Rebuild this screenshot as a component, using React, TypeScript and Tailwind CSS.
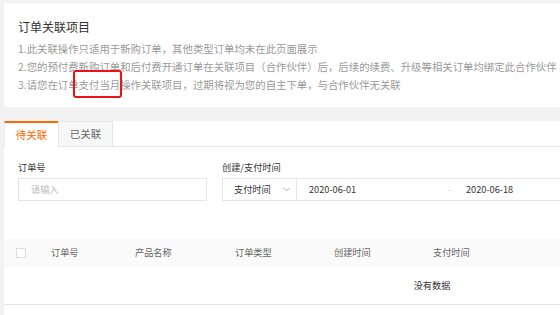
import { ChevronDown } from "lucide-react";

const notes = [
  "1.此关联操作只适用于新购订单，其他类型订单均未在此页面展示",
  "2.您的预付费新购订单和后付费开通订单在关联项目（合作伙伴）后，后续的续费、升级等相关订单均绑定此合作伙伴",
  "3.请您在订单支付当月操作关联项目，过期将视为您的自主下单，与合作伙伴无关联",
];

const columns = ["订单号", "产品名称", "订单类型", "创建时间", "支付时间"];

function NoticeCard() {
  return (
    <section className="relative bg-white px-[14px] pt-[14px] pb-[13px]">
      <h2 className="mb-[3px] text-[12px] leading-[20px] font-normal text-[#333]">订单关联项目</h2>
      {notes.map(line => (
        <p key={line} className="text-[10.4px] leading-[18px] whitespace-nowrap text-[#9a9a9a]">
          {line}
        </p>
      ))}
      {/* annotation box round 支付当月 */}
      <span className="absolute top-[67px] left-[69px] h-[28px] w-[49px] rounded-[3px] border-2 border-[#e8141a]" />
    </section>
  );
}

function Tabs() {
  return (
    <div className="flex h-[26px] border-b border-[#e6e6e6] text-[10.5px]">
      <button className="-mb-px flex w-[54px] items-center justify-center border-t-2 border-l border-[#ff6a00] border-l-[#ececec] bg-white text-[#ff6a00]">
        待关联
      </button>
      <button className="flex w-[55px] items-center justify-center border border-b-0 border-[#e6e6e6] bg-[#f7f7f7] text-[#666]">
        已关联
      </button>
    </div>
  );
}

function Filters() {
  return (
    <div className="flex gap-[15px] px-[14px] pt-[11px] text-[9.2px]">
      <label className="flex w-[189px] flex-col">
        <span className="mb-[2px] leading-[18px] text-[#333]">订单号</span>
        <div className="flex h-[23px] items-center border border-[#e6e6e6] px-[12px] text-[#bbb]">请输入</div>
      </label>
      <div className="flex flex-col">
        <span className="mb-[2px] leading-[18px] text-[#333]">创建/支付时间</span>
        <div className="flex h-[23px]">
          <div className="flex w-[75px] items-center justify-between border border-[#e6e6e6] pr-[4px] pl-[11px] text-[#333]">
            支付时间
            <ChevronDown className="h-[11px] w-[11px] text-[#888]" strokeWidth={1.5} />
          </div>
          <div className="flex w-[400px] items-center border border-l-0 border-[#e6e6e6] pl-[12px] text-[#333]">
            <span className="w-[139px]">2020-06-01</span>
            <span className="w-[18px] text-[#ccc]">-</span>
            <span>2020-06-18</span>
          </div>
        </div>
      </div>
    </div>
  );
}

function OrderTable() {
  return (
    <div className="mt-[38px] text-[9.2px]">
      <div className="grid h-[28px] grid-cols-[47px_84px_100px_99px_99px_1fr] items-center bg-[#fafafa] text-[#666]">
        <span className="ml-[12px] h-[10px] w-[10px] border border-[#ddd] bg-white" />
        {columns.map(col => (
          <span key={col}>{col}</span>
        ))}
      </div>
      <div className="flex h-[38px] items-center justify-center border-b border-[#e6e6e6] text-[#333]">没有数据</div>
    </div>
  );
}

export default function App() {
  return (
    <div className="h-[315px] w-[560px] overflow-hidden bg-[#f2f2f2]">
      <div
        className="w-[860px] pt-[3px] pl-[4px]"
        style={{ fontFamily: '"Noto Sans CJK SC", "Noto Sans", sans-serif' }}
      >
        <NoticeCard />
        <section className="mt-[14px] bg-white pb-[20px]">
          <Tabs />
          <Filters />
          <OrderTable />
        </section>
      </div>
    </div>
  );
}
